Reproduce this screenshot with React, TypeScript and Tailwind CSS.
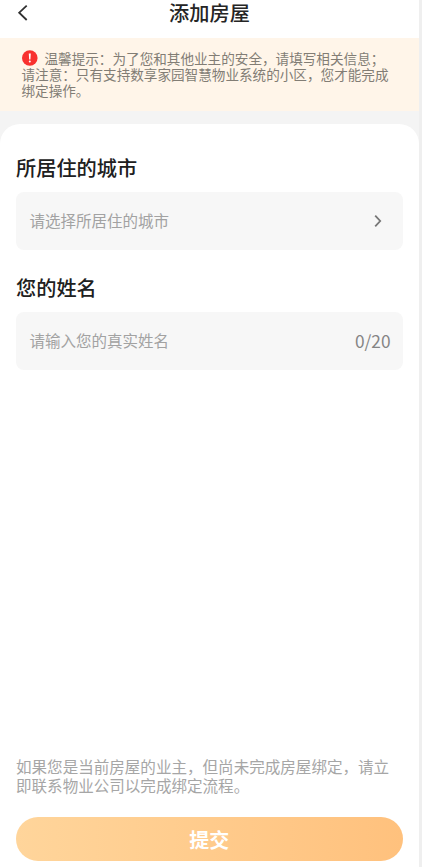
import React from "react";

function Header() {
  return (
    <header className="grid h-[37.5px] shrink-0 grid-cols-[40px_1fr_40px] bg-white">
      <button aria-label="返回" className="flex h-[26px] items-center pl-[17px]">
        <svg width="12" height="18" viewBox="0 0 12 18" fill="none" stroke="#303030" strokeWidth="1.8">
          <path d="M9.7 1.6 2.2 8.7l7.5 7.3" />
        </svg>
      </button>
      <h1 className="h-[26px] text-center text-[20.2px] leading-[26px] font-medium text-[#252525]">添加房屋</h1>
    </header>
  );
}

function Notice() {
  return (
    <section className="h-[73px] shrink-0 bg-[#fff5e9] pt-[12.5px] pl-[21.5px] text-[13.6px] leading-4 whitespace-nowrap text-[#827d75]">
      <div className="flex items-center">
        <svg className="mr-[7px] shrink-0" width="16" height="16" viewBox="0 0 16 16">
          <circle cx="7.8" cy="8" r="7.8" fill="#f8312f" />
          <path d="M6.8 3.5h2l-.35 6H7.15z" fill="#fff" />
          <circle cx="7.8" cy="11.6" r="1" fill="#fff" />
        </svg>
        <span>温馨提示：为了您和其他业主的安全，请填写相关信息；</span>
      </div>
      <div>请注意：只有支持数享家园智慧物业系统的小区，您才能完成</div>
      <div>绑定操作。</div>
    </section>
  );
}

interface FieldProps {
  label: string;
  placeholder: string;
  children: React.ReactNode;
}

function Field({ label, placeholder, children }: FieldProps) {
  return (
    <section className="h-[119.7px]">
      <h2 className="h-[37px] text-[20.2px] leading-[26px] font-medium text-[#202020]">{label}</h2>
      <div className="flex h-[58px] w-[386.5px] items-center justify-between rounded-[8px] bg-[#f7f7f7] pl-[13.5px] text-[15.5px] text-[#a2a2a2]">
        <span>{placeholder}</span>
        {children}
      </div>
    </section>
  );
}

export default function App() {
  return (
    <div className="h-[867px] w-[422px] overflow-hidden bg-[#efefef] pr-[3px] font-['Noto_Sans_CJK_SC',sans-serif]">
      <div className="flex h-full flex-col bg-[#f4f4f4]">
        <Header />
        <Notice />
        <main className="mt-[13px] flex flex-1 flex-col rounded-t-[20px] bg-white px-4 pt-[31.5px]">
          <Field label="所居住的城市" placeholder="请选择所居住的城市">
            <svg className="mr-[19.5px]" width="10" height="14" viewBox="0 0 10 14" fill="none" stroke="#777" strokeWidth="1.8">
              <path d="m2.2 1.6 5 5.4-5 5.4" />
            </svg>
          </Field>
          <Field label="您的姓名" placeholder="请输入您的真实姓名">
            <span className="mr-3 text-[17.3px] text-[#858585]">0/20</span>
          </Field>
          <div className="mt-auto pb-[6px]">
            <p className="mb-[22.5px] text-[15.55px] leading-[18.5px] whitespace-nowrap text-[#a6a6a6]">
              如果您是当前房屋的业主，但尚未完成房屋绑定，请立
              <br />
              即联系物业公司以完成绑定流程。
            </p>
            <button className="block h-[44.5px] w-[386.5px] rounded-full bg-linear-to-r from-[#ffd59b] to-[#ffc17d] text-[20px] leading-[45px] font-bold text-white">
              提交
            </button>
          </div>
        </main>
      </div>
    </div>
  );
}
